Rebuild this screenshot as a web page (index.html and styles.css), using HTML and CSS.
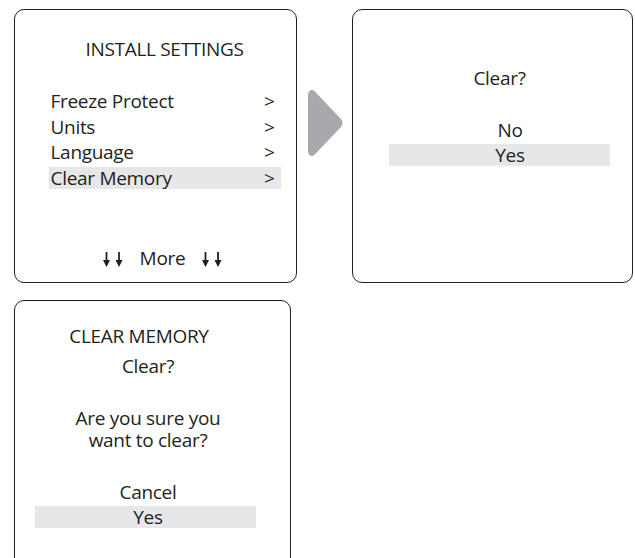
FILE: index.html
```html
<!DOCTYPE html>
<html lang="en">
<head>
    <meta charset="UTF-8">
    <meta name="viewport" content="width=device-width, initial-scale=1.0">
    <title>Clear Memory</title>
    <link rel="stylesheet" href="styles.css">
</head>
<body>
    <div class="screens">
        <div class="screen menu-screen">
            <h2 class="title">INSTALL SETTINGS</h2>
            <ul class="menu">
                <li><span>Freeze Protect</span><span>&gt;</span></li>
                <li><span>Units</span><span>&gt;</span></li>
                <li><span>Language</span><span>&gt;</span></li>
                <li class="selected"><span>Clear Memory</span><span>&gt;</span></li>
            </ul>
            <div class="more">
                <svg class="down" width="20" height="15" viewBox="0 0 20 15">
                    <path d="M3.5 0 V9 M16 0 V9" stroke="#231f20" stroke-width="1.8"/>
                    <path d="M0 8 H7 L3.5 15 Z M12.5 8 H19.5 L16 15 Z" fill="#231f20"/>
                </svg>
                <span>More</span>
                <svg class="down" width="20" height="15" viewBox="0 0 20 15">
                    <path d="M3.5 0 V9 M16 0 V9" stroke="#231f20" stroke-width="1.8"/>
                    <path d="M0 8 H7 L3.5 15 Z M12.5 8 H19.5 L16 15 Z" fill="#231f20"/>
                </svg>
            </div>
        </div>

        <div class="next">
            <svg width="35" height="66" viewBox="0 0 35 66">
                <path d="M4 0 C1.5 0 0 2 0 5 L0 61 C0 64 1.5 66 4 66 C5.5 66 6.5 65 7.5 63.8 L33 37 C35 35 35 31 33 29 L7.5 2.2 C6.5 1 5.5 0 4 0 Z" fill="#a7a9ac"/>
            </svg>
        </div>

        <div class="screen confirm-screen">
            <p class="question">Clear?</p>
            <ul class="options">
                <li>No</li>
                <li class="selected">Yes</li>
            </ul>
        </div>

        <div class="screen memory-screen">
            <h2 class="title">CLEAR MEMORY</h2>
            <p class="question">Clear?</p>
            <p class="warning">Are you sure you<br>want to clear?</p>
            <ul class="options">
                <li>Cancel</li>
                <li class="selected">Yes</li>
            </ul>
        </div>
    </div>
</body>
</html>
```

FILE: styles.css
```css
body {
    margin: 0;
    padding: 9px 0 0 14px;
    height: 558px;
    box-sizing: border-box;
    overflow: hidden;
    background-color: white;
    color: #231f20;
    font-family: "Open Sans", sans-serif;
    font-size: 19px;
    letter-spacing: -0.3px;
}

.screens {
    display: grid;
    grid-template-columns: 283px 55px 281px;
    grid-template-rows: 274px 280px;
    row-gap: 17px;
}

.screen {
    border: 1.5px solid #231f20;
    border-radius: 10px;
    box-sizing: border-box;
}

.title {
    margin: 0;
    font-size: 19px;
    font-weight: normal;
    text-align: center;
}

ul {
    list-style: none;
    margin: 0;
    padding: 0;
}

.selected {
    background-color: #e6e7e8;
}

/* install settings */
.menu-screen {
    display: flex;
    flex-direction: column;
    padding: 26px 15.5px 0 33.5px;
}

.menu {
    margin-top: 28px;
}

.menu li {
    display: flex;
    justify-content: space-between;
    height: 22px;
    line-height: 22px;
    margin-bottom: 3.5px;
    padding: 0 6px 0 2px;
}

.more {
    display: flex;
    align-items: center;
    justify-content: center;
    gap: 17px;
    margin-top: auto;
    margin-bottom: 11px;
    padding-right: 4px;
}

.more .down {
    margin-top: 2px;
}

/* arrow between screens */
.next {
    display: flex;
    align-items: center;
    justify-content: center;
    padding: 0 0 46px 2px;
}

/* clear? */
.confirm-screen {
    padding: 55px 22px 0 36px;
    text-align: center;
}

.question {
    margin: 0;
}

.options li {
    height: 22px;
    line-height: 22px;
    padding-left: 21px;
}

.options li + li {
    margin-top: 2.5px;
}

.confirm-screen .options {
    margin-top: 28px;
}

/* clear memory */
.memory-screen {
    grid-column: 1;
    width: 277px;
    padding: 21.5px 34.5px 0 19.5px;
    text-align: center;
}

.memory-screen .title {
    padding-right: 12px;
}

.memory-screen .question {
    margin-top: 4px;
    padding-left: 6px;
}

.warning {
    margin: 28.5px 0 0;
    padding-left: 6px;
    line-height: 22px;
}

.memory-screen .options {
    margin-top: 30px;
}

.memory-screen .options li {
    padding-left: 6px;
}
```
